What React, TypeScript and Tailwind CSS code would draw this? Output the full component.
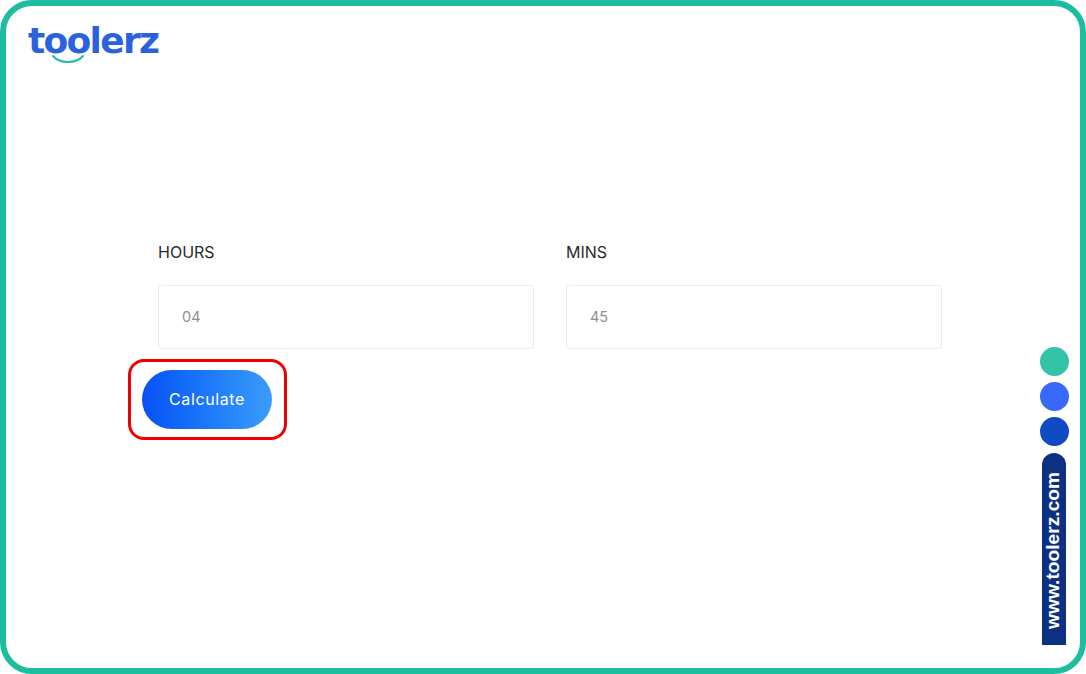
export default function App() {
  const poppins = "font-['Inter','Liberation_Sans',sans-serif]";
  return (
    <div className="relative h-[674px] w-[1086px] overflow-hidden bg-white">
      <div className="flex h-full w-full flex-col rounded-[32px] border-[6px] border-[#1dbd9f] bg-white">
        <div className="relative ml-[22px] mt-[14px] h-[50px] w-[132px]">
          <span className="block font-['DejaVu_Sans',sans-serif] text-[36px] font-bold leading-[42px] tracking-[-1.7px] text-[#2a62de]">toolerz</span>
          <svg className="absolute left-[22px] top-[33px]" width="36" height="12" viewBox="0 0 36 12" fill="none">
            <path d="M3 3 C10 11 26 11 33 3" stroke="#1dbd9f" strokeWidth="2" strokeLinecap="round" />
          </svg>
        </div>

        <div className="ml-[152px] mt-[170px] grid w-[784px] grid-cols-2 gap-x-[32px]">
          <div className="flex flex-col">
            <label className={`${poppins} text-[16px] leading-[24px] text-[#2b2b2b]`}>HOURS</label>
            <div className={`${poppins} mt-[21px] flex h-[64px] items-center rounded-[4px] border border-[#e8ebf8] pl-[23px] text-[14.5px] text-[#8f8f8f]`}>04</div>
          </div>
          <div className="flex flex-col">
            <label className={`${poppins} text-[16px] leading-[24px] text-[#2b2b2b]`}>MINS</label>
            <div className={`${poppins} mt-[21px] flex h-[64px] items-center rounded-[4px] border border-[#e8ebf8] pl-[23px] text-[14.5px] text-[#8f8f8f]`}>45</div>
          </div>
        </div>

        <div className="ml-[122px] mt-[10px] flex h-[81px] w-[159px] items-center rounded-[16px] border-[3px] border-[#f00000] pl-[11px]">
          <button className={`${poppins} h-[59px] w-[130px] rounded-full bg-gradient-to-r from-[#0b4ff5] to-[#3b9cfb] pb-[2px] text-[16px] tracking-[0.6px] text-white`}>Calculate</button>
        </div>
      </div>

      <div className="absolute left-[1040px] top-[347px] flex w-[29px] flex-col items-center gap-[6px]">
        <div className="h-[29px] w-[29px] rounded-full bg-[#33c3a7]" />
        <div className="h-[29px] w-[29px] rounded-full bg-[#3869fb]" />
        <div className="h-[29px] w-[29px] rounded-full bg-[#114bc4]" />
        <div className="-ml-[1px] mt-[1px] flex h-[192px] w-[24px] items-center justify-center rounded-t-[12px] bg-[#0d3082] pt-[3px]">
          <span className="whitespace-nowrap font-['Liberation_Sans',sans-serif] text-[19.2px] font-bold text-white [transform:rotate(-90deg)]">www.toolerz.com</span>
        </div>
      </div>
    </div>
  );
}
